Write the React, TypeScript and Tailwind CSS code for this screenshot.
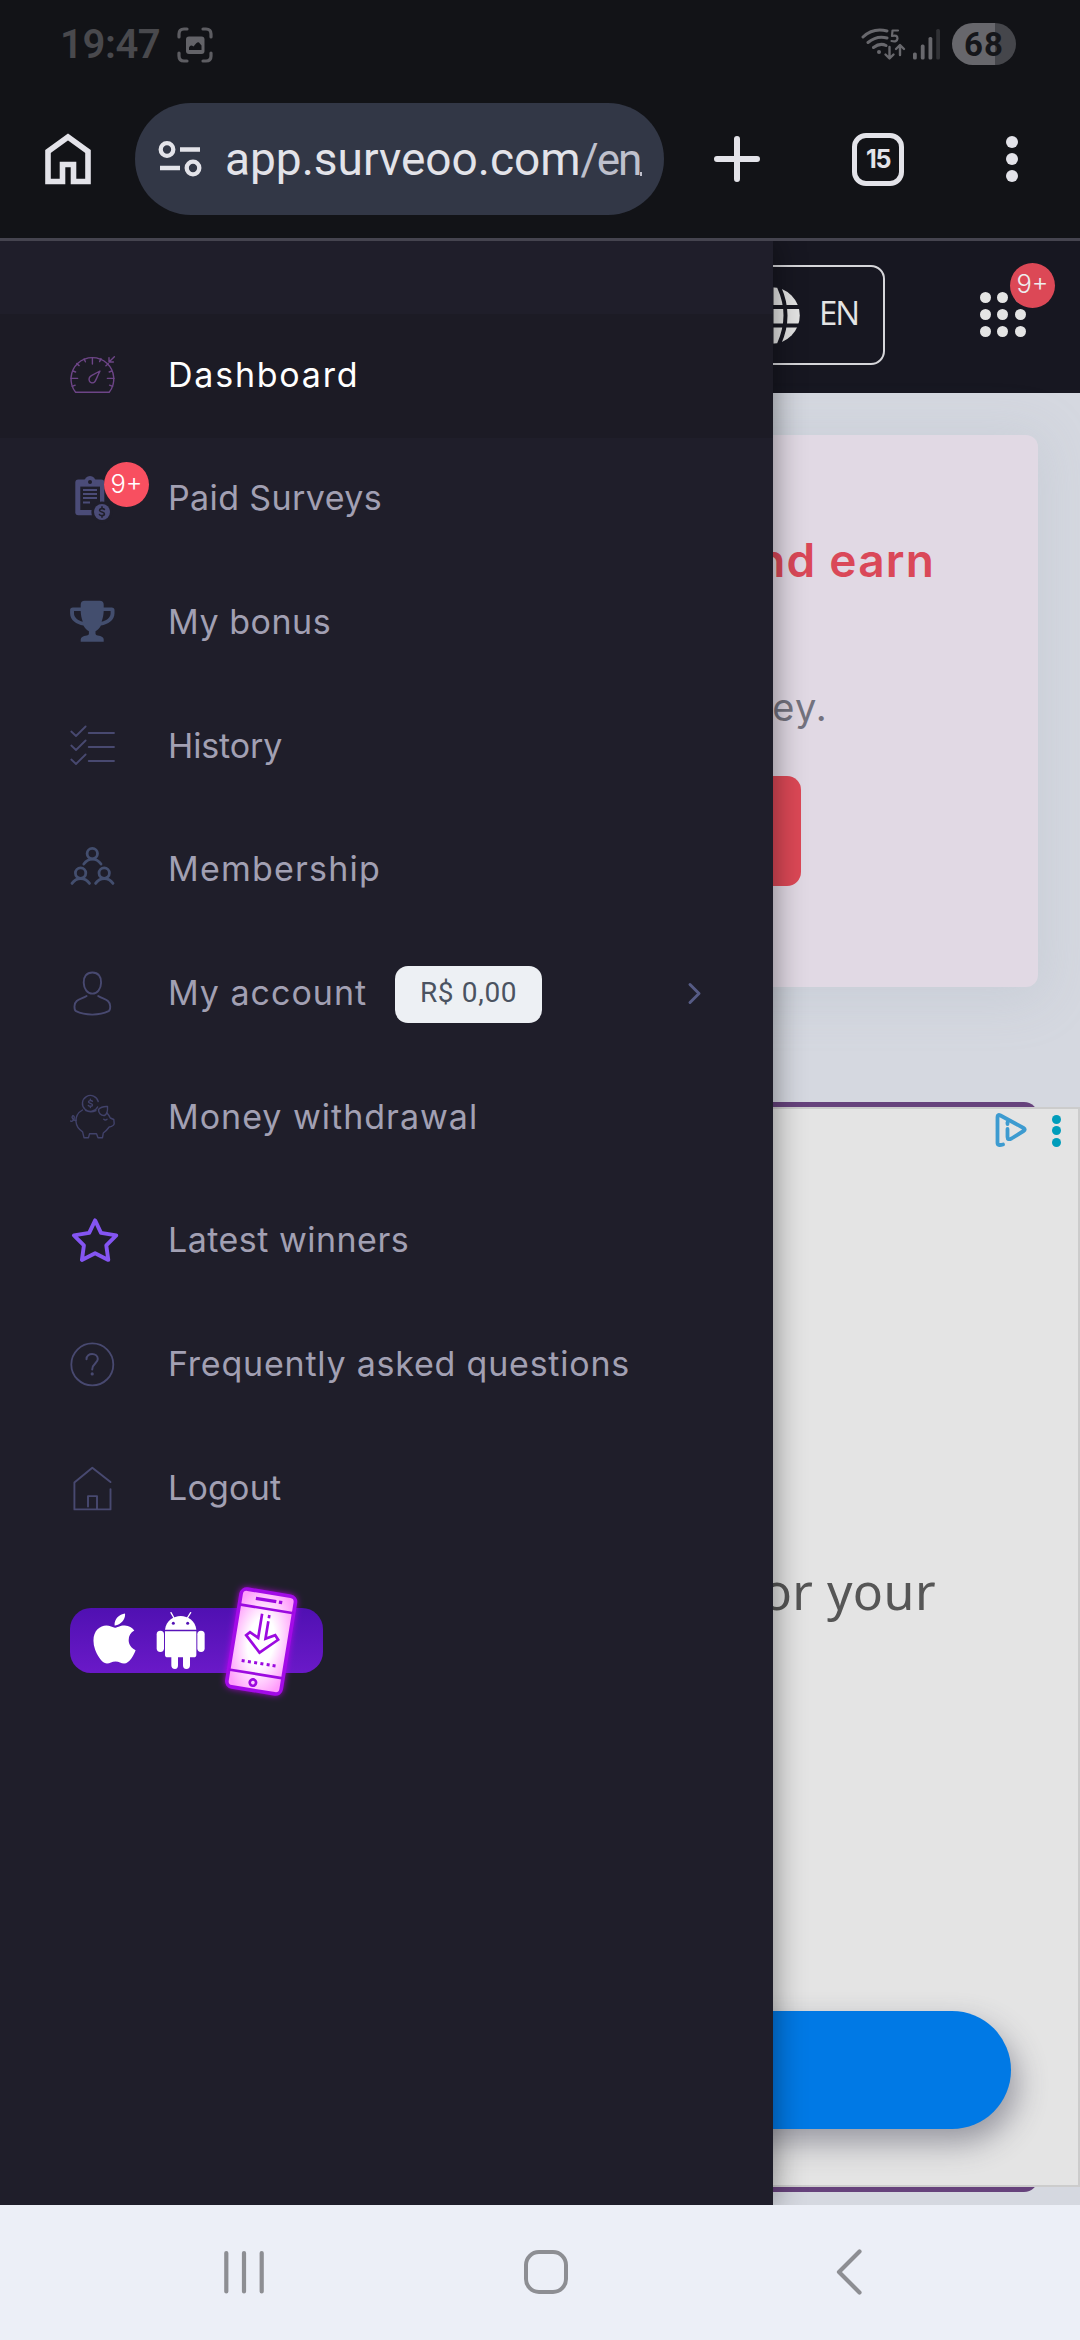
import type { ReactNode } from "react";
import { FaApple } from "react-icons/fa";

const INDIGO = "#484970";
const SLATE = "#434e6e";

function Icon({ children, drop = 0 }: { children: ReactNode; drop?: number }) {
  return (
    <svg width="50" height="50" viewBox={`0 ${-drop} 50 50`} fill="none" strokeLinecap="round" strokeLinejoin="round" className="block overflow-visible">
      {children}
    </svg>
  );
}

const GaugeIcon = () => (
  <Icon>
    <g stroke="#6d4587" strokeWidth="1.4">
      <path d="M7.6 41.3 A21.4 21.4 0 1 1 41.2 41.3 Z" />
      <path d="M24.4 6.6V13M3 27.4H9.6M39.4 27.4H46M5 20l2.6 1M8.7 12.6l2.4 2M16.2 8l1.2 2.8M33 7.6l-1.4 3M40.3 12.8l-2.4 2M43.8 20l-2.6 1M4.2 35.4l3-1.2M44.6 35.4l-3-1.2" />
      <path d="M32 20 L23.4 24.6 C19 27.5 21.6 33.6 26 31.4 C28 30.3 27.6 28.6 32 20Z" />
      <path d="M46.4 5.8 L41 10.9M41 6.6V11h4.4" />
    </g>
  </Icon>
);

const SurveyIcon = () => (
  <Icon drop={0.3}>
    <rect x="7.3" y="5.3" width="29" height="35.7" rx="3" fill="#4b4c78" />
    <circle cx="22" cy="7.6" r="5.8" fill="#4b4c78" />
    <circle cx="22" cy="7.6" r="2" fill="#1f1e2a" />
    <rect x="12.3" y="12.3" width="19.7" height="23.4" fill="#1f1e2a" />
    <path d="M15 15.8H29M15 19.8H29M15 23.8H29M15 28.3H22" stroke="#4b4c78" strokeWidth="2" strokeLinecap="butt" />
    <circle cx="34" cy="37.7" r="10.6" fill="#1f1e2a" />
    <circle cx="34" cy="37.7" r="8" fill="#4b4c78" />
    <path d="M36.4 35.2C35.6 34 31.4 33.8 31.6 36.2C31.8 38.2 36.4 37.2 36.4 39.6C36.4 41.8 32.2 41.6 31.5 40.2M34 32.6V34.2M34 41.3V42.9" stroke="#1f1e2a" strokeWidth="1.6" />
  </Icon>
);

const TrophyIcon = () => (
  <Icon drop={0.7}>
    <path
      fill={SLATE}
      fillRule="evenodd"
      d="M12.7 6q0-3.9 4-3.9h15q4 0 4 3.9v2.7h8q2.8 0 2.8 2.6v3.2c0 7-6.500 11.200-13.500 12.200c-1.700 3-3.300 4.300-5.500 5.800v2.500q0 1.600 2.200 1.700q6 .8 6 4v2.300h-23v-2.300q0-3.200 6-4q2.200 0 2.200-1.700v-2.500c-2.200-1.500-3.800-2.800-5.500-5.800c-7-1-13.300-5.200-13.300-12.200v-3.200q0-2.600 2.800-2.600h7.800zM6 12.300v2.500c0 4 4 7 8.800 8.200c-1.300-3.500-2-6.800-2.100-10.700zM42.600 12.300h-6.900c-.1 3.900-.8 7.200-2.100 10.700c5-1.200 9-4.200 9-8.200z"
    />
  </Icon>
);

const ChecklistIcon = () => (
  <Icon drop={1}>
    <path
      stroke={INDIGO}
      strokeWidth="1.8"
      d="M3.300 8.500L8 13L17.600 3.500M20.700 10H46M3.300 22.500L8 27L17.600 17.500M20.700 24H46M3.300 36.500L8 41L17.600 31.500M20.700 38H46"
    />
  </Icon>
);

const TeamIcon = () => (
  <Icon drop={1.4}>
    <g stroke={SLATE} strokeWidth="2.800">
      <circle cx="24.300" cy="7.200" r="5.200" />
      <path d="M15.800 17.600C20.500 11 28.500 11 33 17.600" />
      <circle cx="12.600" cy="26.700" r="5.200" />
      <path d="M4 37C8.500 30.500 17 30.500 21.500 37" />
      <circle cx="36.200" cy="26.700" r="5.200" />
      <path d="M27.600 37C32 30.500 40.500 30.500 45 37" />
    </g>
  </Icon>
);

const UserIcon = () => (
  <Icon drop={1.7}>
    <g stroke={INDIGO} strokeWidth="1.900">
      <path d="M24.400 1.800C18.500 1.800 15.400 6 15.700 12C15.900 18.500 19.500 22.900 24.400 22.900C29.300 22.900 32.900 18.500 33.100 12C33.400 6 30.300 1.800 24.400 1.800Z" />
      <path d="M18.600 25.300C13.500 28.800 6.700 28.300 6.500 35.500C6.500 38 6.300 39.500 8 40.500C17 45 31.500 45 40.600 40.500C42.400 39.500 42.200 38 42.200 35.500C41.800 28.300 35.200 28.800 30.200 25.300" />
    </g>
  </Icon>
);

const PiggyIcon = () => (
  <Icon drop={2}>
    <g stroke="#41426a" strokeWidth="1.400">
      <path d="M29.600 12A8 8 0 1 1 30.200 6.500M17.500 15.500Q22.300 18.200 28 15.700" />
      <path d="M14.500 15C9 18 7.800 23 8 26.500C8.300 31.500 11 34.500 14.600 36.800L16 42.700H20.500L21.500 38.800H28.500L30 42.700H34.500L35.300 38C37.500 36.500 39.500 34.300 41.200 32C44 31.500 46 30.500 46.200 28.500L45.800 24.500L42.300 23C41.300 21 40.500 19.500 39 18" />
      <path d="M30.500 14.500C33.300 11.500 36.500 11.300 39.500 11.500C39.700 15 39.700 19 36.500 20.500C33 20.800 30.500 18.500 30.500 14.500ZM35.800 24.200Q37.300 25.800 39 24.300" />
      <path d="M8 25.500C5.500 25.500 3 22.500 4.500 21C6.500 20 7 23.500 5 25.500C4 26.500 3 26.300 2.700 26" />
      <path d="M24.400 6.300C23.500 5.200 20.400 5.300 20.500 7C20.600 8.600 24.500 8.100 24.500 10C24.500 11.700 21.100 11.600 20.300 10.400M22.400 4.200V5.400M22.400 11.300V12.500" />
    </g>
  </Icon>
);

const StarIcon = () => (
  <Icon drop={2.4}>
    <path
      stroke="#8455f2"
      strokeWidth="3.900"
      d="M27.100 2L33 14.500L48.300 17L38.300 27L40.300 41.500L27.100 34.800L13.900 41.500L15.900 27L5.900 17L21.200 14.500Z"
    />
  </Icon>
);

const HelpIcon = () => (
  <Icon drop={2.7}>
    <circle cx="24.300" cy="21.700" r="21" stroke={INDIGO} strokeWidth="1.800" />
    <path d="M18.500 16.500C18.500 9.500 29.800 9.800 29.800 16.300C29.800 20.500 24.200 20.800 24.200 26.800" stroke={INDIGO} strokeWidth="2" />
    <circle cx="24.200" cy="31.200" r="1.600" fill={INDIGO} />
  </Icon>
);

const HouseIcon = () => (
  <Icon drop={3.1}>
    <path
      stroke={INDIGO}
      strokeWidth="1.900"
      d="M42.500 15L24.300 .7L6.400 15.500V42.300H42.500V22M20 39.500V29H29V42"
    />
  </Icon>
);

const CountBadge = ({ className }: { className: string }) => (
  <span className={`absolute flex h-[45px] w-[45px] items-center justify-center rounded-full pb-[3px] text-[25.500px] font-light leading-none ${className}`}>
    9+
  </span>
);

type Item = { label: string; track: string; icon: ReactNode; active?: boolean; badge?: boolean; balance?: string };

const items: Item[] = [
  { label: "Dashboard", track: "tracking-[1.77px]", icon: <GaugeIcon />, active: true },
  { label: "Paid Surveys", track: "tracking-[0.39px]", icon: <SurveyIcon />, badge: true },
  { label: "My bonus", track: "tracking-[0.54px]", icon: <TrophyIcon /> },
  { label: "History", track: "tracking-[-0.11px]", icon: <ChecklistIcon /> },
  { label: "Membership", track: "tracking-[1.22px]", icon: <TeamIcon /> },
  { label: "My account", track: "tracking-[0.99px]", icon: <UserIcon />, balance: "R$ 0,00" },
  { label: "Money withdrawal", track: "tracking-[1px]", icon: <PiggyIcon /> },
  { label: "Latest winners", track: "tracking-[0.48px]", icon: <StarIcon /> },
  { label: "Frequently asked questions", track: "tracking-[0.78px]", icon: <HelpIcon /> },
  { label: "Logout", track: "tracking-[0.21px]", icon: <HouseIcon /> },
];

function MenuRow({ item }: { item: Item }) {
  return (
    <li className={`flex h-[123.660px] items-center pl-[68px] pr-[70px] ${item.active ? "bg-[#1c1b25] text-white" : "text-[#a2a0b3]"}`}>
      <div className="relative mr-[50px] h-[50px] w-[50px] shrink-0">
        {item.icon}
        {item.badge && <CountBadge className="-top-[12px] left-[36px] bg-[#f84f60] text-white" />}
      </div>
      <span className={`-mt-[2px] whitespace-nowrap text-[34px] leading-none ${item.track}`}>{item.label}</span>
      {item.balance && (
        <>
          <span className="ml-[28px] flex h-[57px] w-[147px] items-center justify-center rounded-[13px] bg-[#edf0f4] pb-[3px] font-['Roboto'] text-[28px] leading-none tracking-[0.68px] text-[#4b5361]">
            {item.balance}
          </span>
          <svg width="18" height="28" viewBox="0 0 18 28" fill="none" stroke="#565b85" strokeWidth="3" strokeLinecap="round" strokeLinejoin="round" className="ml-auto">
            <path d="M5 4.500l9 9-9 9" />
          </svg>
        </>
      )}
    </li>
  );
}

function AppPromo() {
  return (
    <div className="relative ml-[70px] mt-[57px] flex h-[65px] w-[253px] items-center rounded-[21px] bg-linear-to-b from-[#5010b2] to-[#6a19c8] pl-[23px] text-white">
      <FaApple className="-mt-1 h-[59px] w-[43px]" />
      <svg viewBox="0 0 900 420" width="300" height="140" fill="none" className="absolute -left-[20px] -top-[38px]">
        <defs>
          <radialGradient id="screen" cx="50%" cy="50%" r="60%">
            <stop offset="40%" stopColor="#ffffff" />
            <stop offset="100%" stopColor="#ff9dfb" />
          </radialGradient>
          <filter id="glow" x="-40%" y="-30%" width="180%" height="160%">
            <feGaussianBlur stdDeviation="11" />
          </filter>
        </defs>
        <g fill="#fff">
          <path d="M345 179C348 153 370 138 392 138C414 138 436 153 439 179Z" />
          <path d="M372 144L363 128M412 144L422 128" stroke="#fff" strokeWidth="4" strokeLinecap="round" />
          <rect x="320" y="182" width="22" height="64" rx="11" />
          <rect x="442" y="182" width="22" height="64" rx="11" />
          <path d="M345 184H439V254Q439 262 431 262H420V286Q420 297 409 297Q399 297 399 286V262H384V286Q384 297 375 297Q364 297 364 286V262H353Q345 262 345 254Z" />
        </g>
        <circle cx="370" cy="160" r="4.500" fill="#5212b5" />
        <circle cx="413" cy="160" r="4.500" fill="#5212b5" />
        <g transform="rotate(9.300 633 214)">
          <rect x="548" y="64" width="170" height="301" rx="18" fill="#c400f5" filter="url(#glow)" />
          <rect x="551" y="66" width="165" height="297" rx="17" fill="url(#screen)" stroke="#a30be8" strokeWidth="11" />
          <g stroke="#9c0ae0" strokeWidth="8">
            <path d="M551 115H716M551 313H716" />
            <path d="M597 89H659M667 89H677" strokeWidth="10" />
            <path d="M623 132V205L596 192L586 203L634 248L683 201L672 189L645 204V151M645 142V132" />
            <path d="M585 280H594M604 280H613M623 280H632M642 280H651M661 280H670M679 280H688" strokeWidth="9" />
          </g>
          <circle cx="629" cy="340" r="9.500" stroke="#9c0ae0" strokeWidth="8" />
        </g>
      </svg>
    </div>
  );
}

function StatusBar() {
  return (
    <div className="flex h-[88px] items-center pl-[60px] pr-[64px]">
      <span className="mt-[2px] font-['Roboto'] text-[40px] font-semibold leading-none tracking-[-0.400px] text-[#49494d]">19:47</span>
      <svg width="36" height="36" viewBox="0 0 36 36" fill="none" className="ml-[17px] mt-[1px]">
        <path d="M2 10V7Q2 2 7 2H10M26 2H29Q34 2 34 7V10M34 26V29Q34 34 29 34H26M10 34H7Q2 34 2 29V26" stroke="#5d5d62" strokeWidth="3.200" strokeLinecap="round" />
        <rect x="9" y="9.500" width="18.500" height="17.500" rx="3" fill="#636368" />
        <path d="M12 23V20.500Q13.500 17 16.500 19.500Q20.500 14 22 15.500L24.500 18.500V23Z" fill="#121317" />
      </svg>
      <div className="ml-auto flex items-center">
        <svg width="46" height="34" viewBox="0 0 46 34" fill="none" stroke="#68686d" strokeLinecap="round" strokeLinejoin="round">
          <path d="M2 10Q12 .5 26 4M7 15.500Q16 8 26 11M12.500 20.500Q19 15.500 25 18.500" strokeWidth="3" />
          <circle cx="18" cy="25" r="2" fill="#68686d" stroke="none" />
          <path d="M37 3.500H31.500L31 9Q36.500 7.500 36.500 11.500Q36 15.500 30.500 14" strokeWidth="2.200" />
          <path d="M28.500 20V31M24.500 27.500L28.500 31.500L32.500 27.500M39 28V18.500M35 22L39 18L43 22" strokeWidth="2.400" />
        </svg>
        <svg width="28" height="31" viewBox="0 0 28 31" className="ml-[6px]">
          <rect x="0" y="23.500" width="3.800" height="7" rx="1.600" fill="#68686d" />
          <rect x="7.800" y="15.500" width="3.800" height="15" rx="1.600" fill="#68686d" />
          <rect x="15.500" y="8" width="3.800" height="22.500" rx="1.600" fill="#68686d" />
          <rect x="23.200" y="0" width="3.800" height="30.500" rx="1.600" fill="#303135" />
        </svg>
        <div className="ml-[11px] flex h-[42px] w-[64px] items-center justify-center rounded-full bg-linear-to-r from-[#67676c] from-67% to-[#45464b] to-67% font-['Roboto'] text-[33px] font-bold leading-none tracking-[1px] text-[#15161a]">
          68
        </div>
      </div>
    </div>
  );
}

function BrowserBar() {
  return (
    <div className="flex h-[150px] items-start">
      <svg width="50" height="56" viewBox="0 0 50 56" fill="none" className="ml-[43px] mt-[43px]">
        <path d="M5 50.500V20.500L25 6L45 20.500V50.500H30.500V33.500H19.500V50.500Z" stroke="#e3e3e9" strokeWidth="5.600" />
      </svg>
      <div className="ml-[42px] mt-[15px] flex h-[112px] w-[529px] items-center rounded-full bg-[#323746] pl-[23px]">
        <svg width="44" height="40" viewBox="0 0 44 40" fill="none" stroke="#e3e3e9" strokeWidth="4.300" className="shrink-0">
          <circle cx="9" cy="10.500" r="6.300" />
          <path d="M22 10.500H42M2 29H22" />
          <circle cx="35" cy="29" r="6.300" />
        </svg>
        <div className="ml-[23px] whitespace-nowrap font-['Roboto'] text-[46px] leading-[60px] text-[#e3e3e9]">
          app.surveoo.com<span className="text-[44px] tracking-[-2px] text-[#bfc0cc]">/en</span>
        </div>
        <span className="mt-[30px] h-[4px] w-[2px] bg-[#bfc0cc]" />
      </div>
      <svg width="48" height="48" viewBox="0 0 48 48" stroke="#e3e3e9" strokeWidth="6" strokeLinecap="round" className="ml-[49px] mt-[47px]">
        <path d="M24 4V44M4 24H44" />
      </svg>
      <div className="ml-[91px] mt-[45px] flex h-[53px] w-[52px] items-center justify-center rounded-[14px] border-[5.500px] border-[#e3e3e9] text-[25px] font-bold leading-none tracking-[-1.28px] text-[#e3e3e9]">
        15
      </div>
      <div className="ml-[102px] mt-[48px] flex flex-col gap-[5px]">
        <span className="h-3 w-3 rounded-full bg-[#e3e3e9]" />
        <span className="h-3 w-3 rounded-full bg-[#e3e3e9]" />
        <span className="h-3 w-3 rounded-full bg-[#e3e3e9]" />
      </div>
    </div>
  );
}

function SiteHeader() {
  return (
    <div className="flex h-[152px] shrink-0 justify-end bg-[#171721] pr-[54px] pt-6">
      <div className="flex h-[100px] w-[170px] items-center rounded-[14px] border-2 border-[#d6d6da] pl-[26px]">
        <svg width="57" height="57" viewBox="0 0 57 57" fill="none">
          <circle cx="28.500" cy="28.500" r="28.300" fill="#e4e4e4" />
          <path d="M0 20H57M0 38.500H57M28.500 0V57M36 0Q49 28.500 36 57M21 0Q8 28.500 21 57" stroke="#171721" strokeWidth="4" />
        </svg>
        <span className="-mt-[5px] ml-[19px] font-['Open_Sans'] text-[33px] leading-none tracking-[-2px] text-[#e4e4e4]">EN</span>
      </div>
      <div className="relative ml-[95px] mt-[27px] h-[46px] w-[46px]">
        <div className="grid grid-cols-3 gap-[6px]">
          {[0, 1, 2, 3, 4, 5, 6, 7, 8].map((n) => (
            <span key={n} className="h-[11px] w-[11px] rounded-full bg-[#e4e4e4]" />
          ))}
        </div>
        <CountBadge className="-top-[29px] left-[30px] bg-[#dc4856] text-[#eee]" />
      </div>
    </div>
  );
}

function PageContent() {
  return (
    <div className="flex h-full flex-col bg-[#d5d8e0]">
      <SiteHeader />
      <section className="mx-[42px] mt-[42px] flex h-[552px] shrink-0 flex-col items-end rounded-[12px] bg-[#e1d9e4] pt-[97px] shadow-[0_6px_50px_8px_rgba(160,172,185,0.22)]">
        <h2 className="mr-[103px] whitespace-nowrap text-[46px] font-semibold leading-[56px] tracking-[1.200px] text-[#da4858]">and earn</h2>
        <p className="mr-[210px] mt-[97px] whitespace-nowrap text-[38px] leading-[44px] tracking-[1.200px] text-[#73727e]">money.</p>
        <div className="mr-[237px] mt-[47px] h-[110px] w-[500px] rounded-[14px] bg-[#dc4856]" />
      </section>
      <div className="relative mt-[115px] h-[1090px] shrink-0">
        <div className="mx-[42px] h-full rounded-[14px] bg-[#66427c]" />
        <div className="absolute inset-x-0 bottom-[5px] top-[5px] flex flex-col items-end border-2 border-[#cccccc] bg-[#e4e4e4]">
          <div className="mr-[17px] mt-[3px] flex items-center gap-[24px]">
            <svg width="34" height="36" viewBox="0 0 34 36" fill="none" stroke="#3d9bd0" strokeWidth="3.800" strokeLinejoin="round" strokeLinecap="round">
              <path d="M9 32.500Q3.500 34 3.500 31V5Q3.500 2 6.500 3.500L29.500 16Q32 17.500 29.500 19L17.500 26.500Q13.500 28.500 13.500 25V17" />
              <path d="M13.500 10.500V12" />
            </svg>
            <div className="mt-[1px] flex flex-col gap-[2.500px]">
              <span className="h-[9px] w-[9px] rounded-full bg-[#009dbb]" />
              <span className="h-[9px] w-[9px] rounded-full bg-[#009dbb]" />
              <span className="h-[9px] w-[9px] rounded-full bg-[#009dbb]" />
            </div>
          </div>
          <p className="mr-[142px] mt-[409px] whitespace-nowrap font-['Noto_Sans'] text-[50px] leading-[68px] tracking-[0.450px] text-[#565656]">for your</p>
          <div className="mb-[56px] mr-[67px] mt-auto h-[118px] w-[880px] rounded-full bg-[#0079e5] shadow-[6px_14px_30px_rgba(60,60,80,0.45)]" />
        </div>
      </div>
    </div>
  );
}

function NavBar() {
  return (
    <nav className="flex h-[135px] items-center bg-[#eceff7]">
      <svg width="42" height="46" viewBox="0 0 42 46" fill="none" stroke="#8d8e93" strokeWidth="4.200" strokeLinecap="round" className="ml-[223px]">
        <path d="M3.300 3V41.500M21 3V41.500M38.700 3V41.500" />
      </svg>
      <div className="-mt-[1px] ml-[259px] h-[44px] w-[44px] rounded-[15px] border-[4px] border-[#8d8e93]" />
      <svg width="26" height="48" viewBox="0 0 26 48" fill="none" stroke="#8d8e93" strokeWidth="4.200" strokeLinecap="round" strokeLinejoin="round" className="-mt-[1px] ml-[268px]">
        <path d="M23.500 3.500L3 24L23.500 44.500" />
      </svg>
    </nav>
  );
}

export default function App() {
  return (
    <div className="flex h-[2340px] w-[1080px] flex-col overflow-hidden bg-[#121317] font-['Inter',sans-serif]">
      <StatusBar />
      <BrowserBar />
      <div className="h-[3px] bg-[#45444f]" />
      <main className="relative h-[1964px] overflow-hidden">
        <PageContent />
        <aside className="absolute inset-y-0 left-0 w-[773px] bg-[#1f1e2a] pt-[73px] shadow-[0_0_30px_rgba(0,0,0,0.45)]">
          <ul>
            {items.map((item) => (
              <MenuRow key={item.label} item={item} />
            ))}
          </ul>
          <AppPromo />
        </aside>
      </main>
      <NavBar />
    </div>
  );
}
